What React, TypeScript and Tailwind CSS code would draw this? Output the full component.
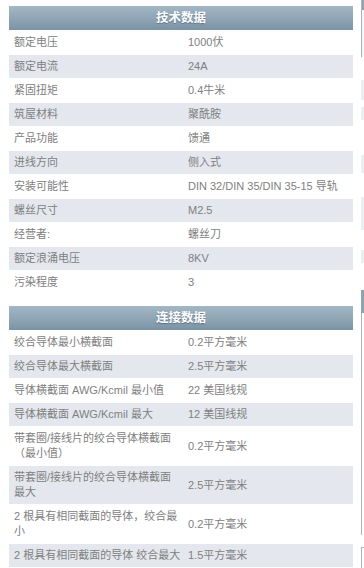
import React from "react";

type Row = { label: string; value: string };

const techRows: Row[] = [
  { label: "额定电压", value: "1000伏" },
  { label: "额定电流", value: "24A" },
  { label: "紧固扭矩", value: "0.4牛米" },
  { label: "筑屋材料", value: "聚酰胺" },
  { label: "产品功能", value: "馈通" },
  { label: "进线方向", value: "侧入式" },
  { label: "安装可能性", value: "DIN 32/DIN 35/DIN 35-15 导轨" },
  { label: "螺丝尺寸", value: "M2.5" },
  { label: "经营者:", value: "螺丝刀" },
  { label: "额定浪涌电压", value: "8KV" },
  { label: "污染程度", value: "3" },
];

const connRows: Row[] = [
  { label: "绞合导体最小横截面", value: "0.2平方毫米" },
  { label: "绞合导体最大横截面", value: "2.5平方毫米" },
  { label: "导体横截面 AWG/Kcmil 最小值", value: "22 美国线规" },
  { label: "导体横截面 AWG/Kcmil 最大", value: "12 美国线规" },
  { label: "带套圈/接线片的绞合导体横截面（最小值）", value: "0.2平方毫米" },
  { label: "带套圈/接线片的绞合导体横截面最大", value: "2.5平方毫米" },
  { label: "2 根具有相同截面的导体，绞合最小", value: "0.2平方毫米" },
  { label: "2 根具有相同截面的导体 绞合最大", value: "1.5平方毫米" },
];

function SpecTable({ title, rows }: { title: string; rows: Row[] }) {
  return (
    <table className="w-[344px] table-fixed border-separate border-spacing-x-0 border-spacing-y-[1px]">
      <thead>
        <tr>
          <th
            colSpan={2}
            className="h-[24px] bg-[linear-gradient(180deg,#a3b6c4_0%,#8ea4b4_55%,#7a93a5_100%)] text-center text-[12.5px] font-bold leading-[24px] text-white [text-shadow:0_1px_1px_rgba(40,60,80,0.45)]"
          >
            {title}
          </th>
        </tr>
      </thead>
      <tbody>
        {rows.map((row, i) => (
          <tr key={row.label} className={i % 2 === 1 ? "bg-[#e4e8ee]" : "bg-white"}>
            <td className="w-1/2 py-[4px] pl-[5px] pr-0 align-middle text-[11px] leading-[15px] text-[#808080]">
              {row.label}
            </td>
            <td className="w-1/2 py-[4px] pl-[7px] pr-0 align-middle text-[11px] leading-[15px] text-[#808080]">
              {row.value}
            </td>
          </tr>
        ))}
      </tbody>
    </table>
  );
}

export default function App() {
  return (
    <div
      className="flex h-[568px] w-[364px] overflow-hidden bg-white"
      style={{ fontFamily: '"Liberation Sans", "Noto Sans CJK SC", sans-serif' }}
    >
      <div className="flex shrink-0 flex-col gap-[10px] pl-[9px] pt-[5px]">
        <SpecTable title="技术数据" rows={techRows} />
        <SpecTable title="连接数据" rows={connRows} />
      </div>
      {/* edge of the next column, cut off by the window */}
      <div className="ml-[8px] flex w-[4px] shrink-0 flex-col">
        <div className="h-[57px] border-l border-[#a9b4bd] bg-[#f3f5f7]">
          <div className="h-[10px] bg-[#8fa3b2]" />
        </div>
        <div className="mt-[23px] h-[20px] bg-[#eceff2]" />
        <div className="mt-[7px] h-[13px] bg-[#eceff2]" />
        <div className="mt-[35px] h-[18px] bg-[#eceff2]" />
        <div className="mt-[24px] h-[33px] bg-[#eceff2]" />
        <div className="mt-[20px] h-[13px] bg-[#eceff2]" />
        <div className="mt-[27px] h-[23px] bg-[#8fa3b2]" />
        <div className="h-[222px] border-l border-[#a9b4bd]" />
        <div className="mt-[12px] h-[21px] border-l border-t border-[#a9b4bd]" />
      </div>
    </div>
  );
}
